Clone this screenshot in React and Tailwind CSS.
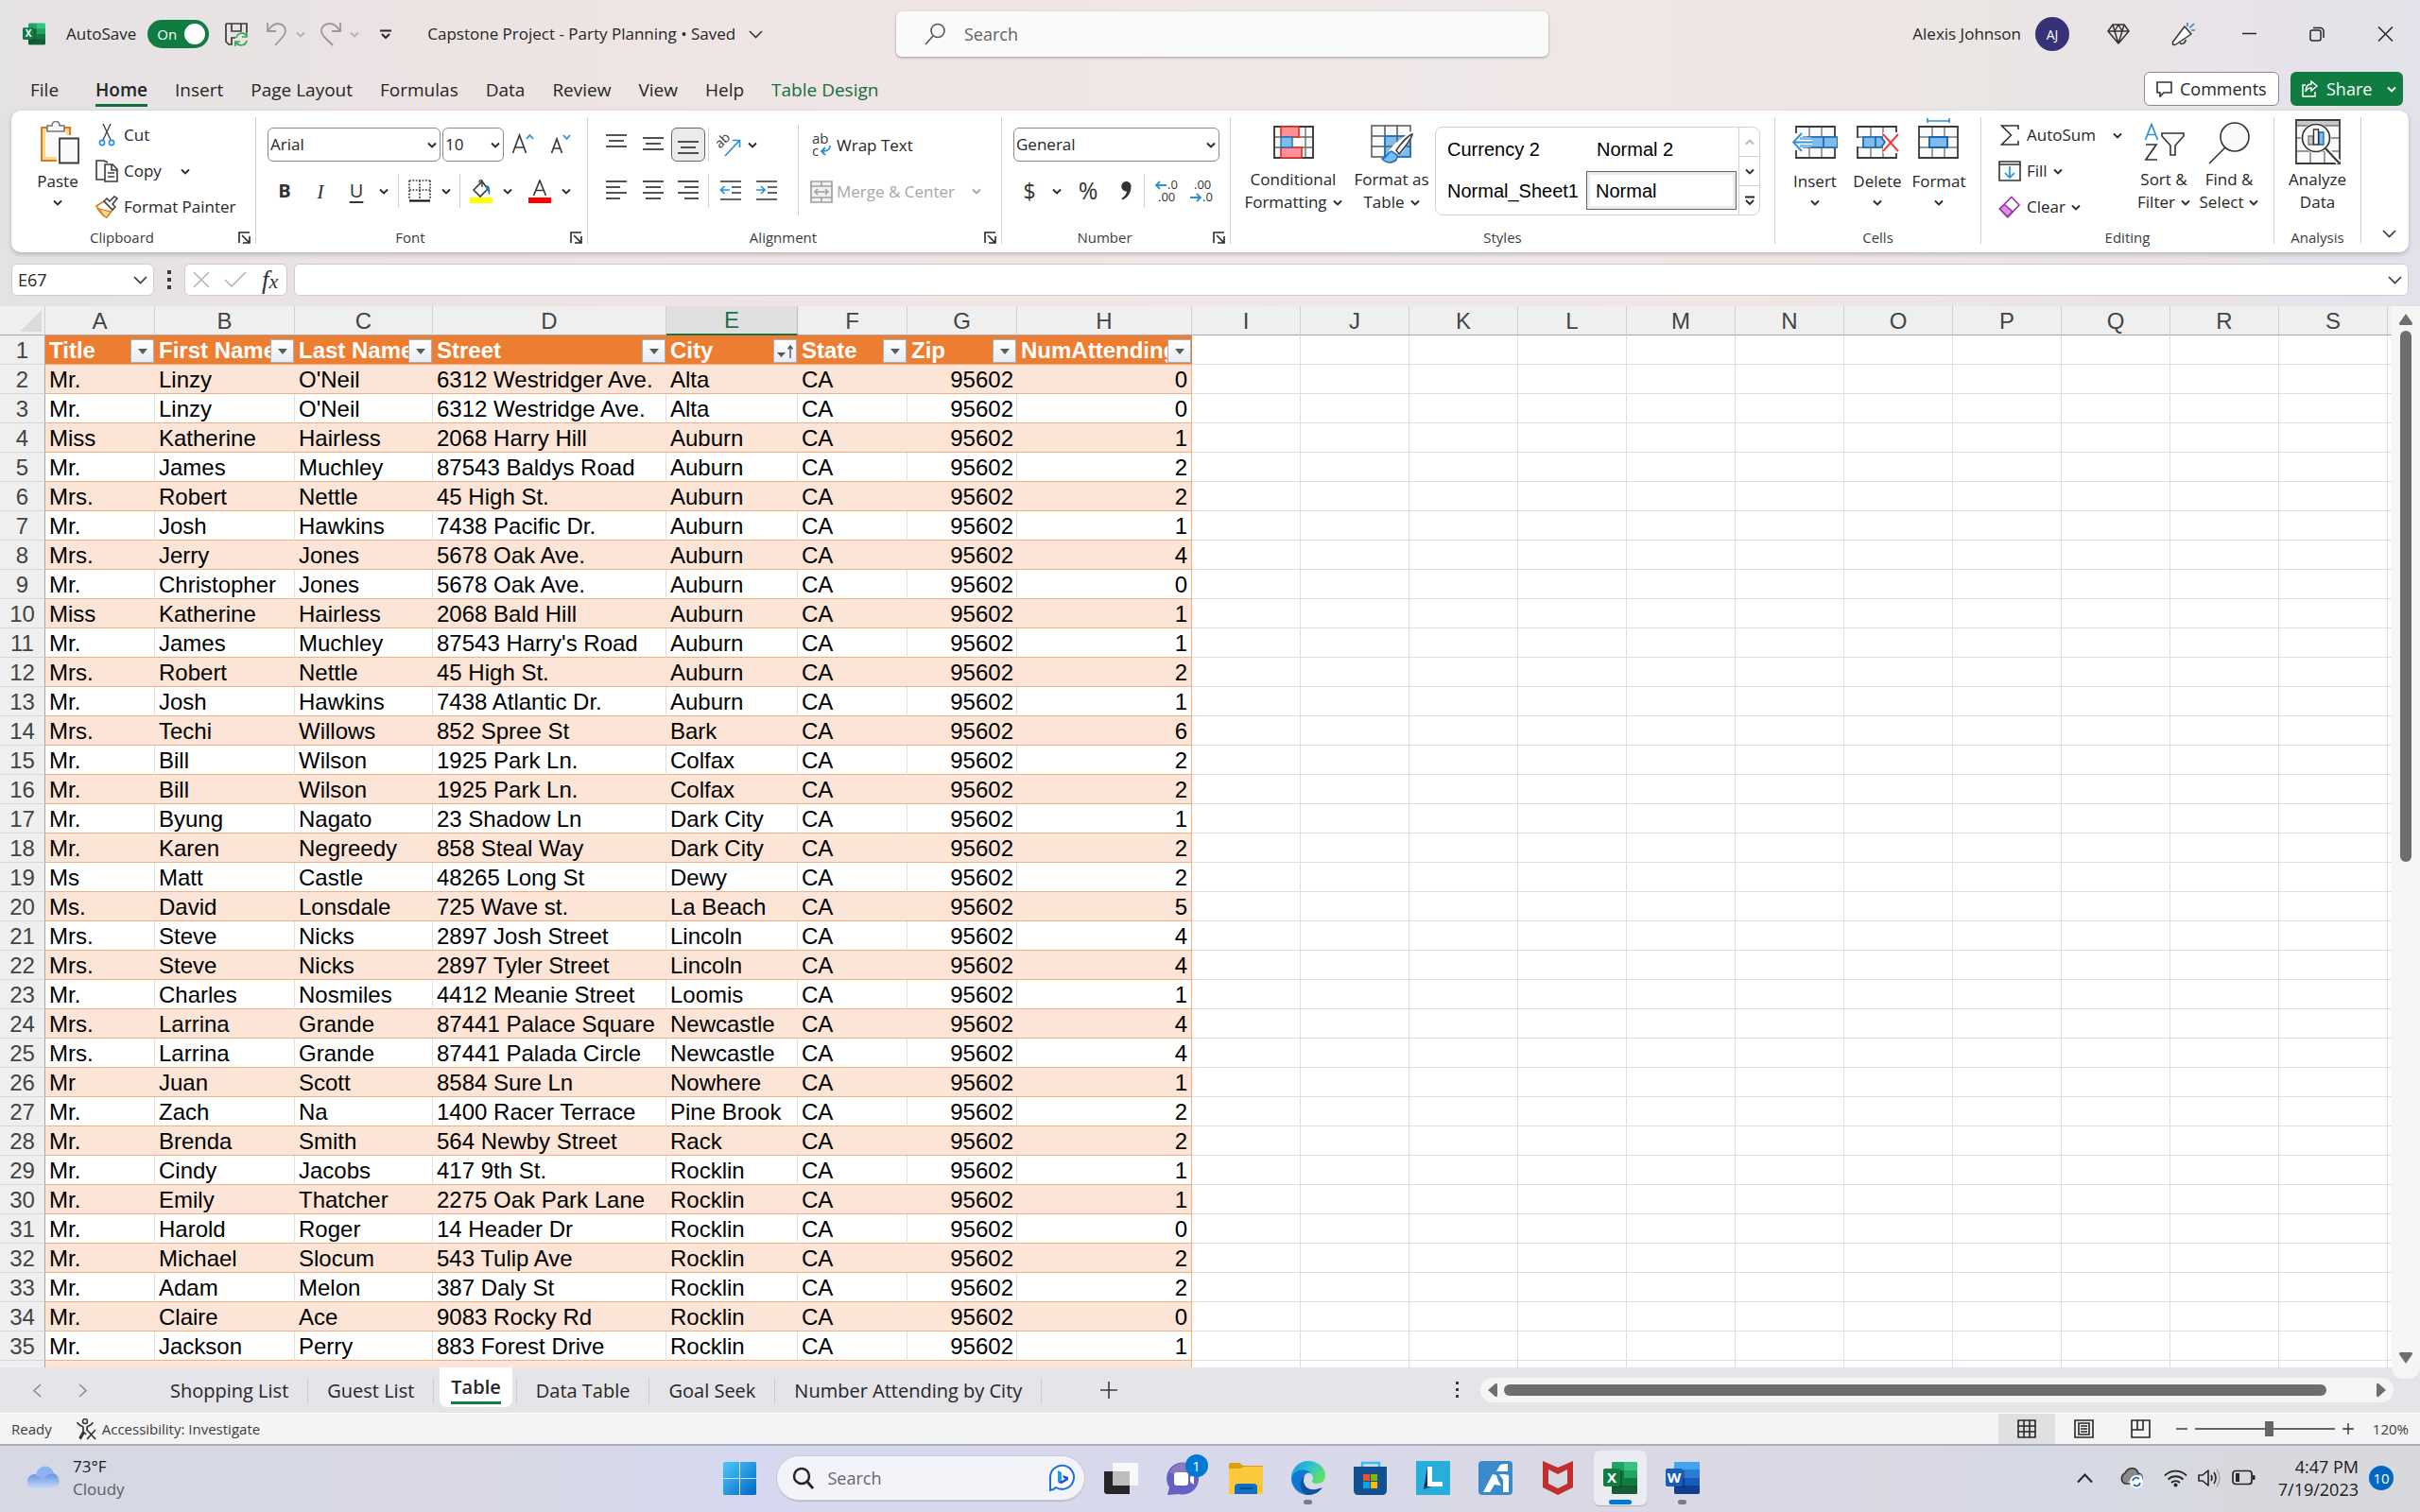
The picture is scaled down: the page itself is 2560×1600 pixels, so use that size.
import React from "react";

const people = [
  ["Mr.", "Linzy", "O'Neil", "6312 Westridger Ave.", "Alta", 0],
  ["Mr.", "Linzy", "O'Neil", "6312 Westridge Ave.", "Alta", 0],
  ["Miss", "Katherine", "Hairless", "2068 Harry Hill", "Auburn", 1],
  ["Mr.", "James", "Muchley", "87543 Baldys Road", "Auburn", 2],
  ["Mrs.", "Robert", "Nettle", "45 High St.", "Auburn", 2],
  ["Mr.", "Josh", "Hawkins", "7438 Pacific Dr.", "Auburn", 1],
  ["Mrs.", "Jerry", "Jones", "5678 Oak Ave.", "Auburn", 4],
  ["Mr.", "Christopher", "Jones", "5678 Oak Ave.", "Auburn", 0],
  ["Miss", "Katherine", "Hairless", "2068 Bald Hill", "Auburn", 1],
  ["Mr.", "James", "Muchley", "87543 Harry's Road", "Auburn", 1],
  ["Mrs.", "Robert", "Nettle", "45 High St.", "Auburn", 2],
  ["Mr.", "Josh", "Hawkins", "7438 Atlantic Dr.", "Auburn", 1],
  ["Mrs.", "Techi", "Willows", "852 Spree St", "Bark", 6],
  ["Mr.", "Bill", "Wilson", "1925 Park Ln.", "Colfax", 2],
  ["Mr.", "Bill", "Wilson", "1925 Park Ln.", "Colfax", 2],
  ["Mr.", "Byung", "Nagato", "23 Shadow Ln", "Dark City", 1],
  ["Mr.", "Karen", "Negreedy", "858 Steal Way", "Dark City", 2],
  ["Ms", "Matt", "Castle", "48265 Long St", "Dewy", 2],
  ["Ms.", "David", "Lonsdale", "725 Wave st.", "La Beach", 5],
  ["Mrs.", "Steve", "Nicks", "2897 Josh Street", "Lincoln", 4],
  ["Mrs.", "Steve", "Nicks", "2897 Tyler Street", "Lincoln", 4],
  ["Mr.", "Charles", "Nosmiles", "4412 Meanie Street", "Loomis", 1],
  ["Mrs.", "Larrina", "Grande", "87441 Palace Square", "Newcastle", 4],
  ["Mrs.", "Larrina", "Grande", "87441 Palada Circle", "Newcastle", 4],
  ["Mr", "Juan", "Scott", "8584 Sure Ln", "Nowhere", 1],
  ["Mr.", "Zach", "Na", "1400 Racer Terrace", "Pine Brook", 2],
  ["Mr.", "Brenda", "Smith", "564 Newby Street", "Rack", 2],
  ["Mr.", "Cindy", "Jacobs", "417 9th St.", "Rocklin", 1],
  ["Mr.", "Emily", "Thatcher", "2275 Oak Park Lane", "Rocklin", 1],
  ["Mr.", "Harold", "Roger", "14 Header Dr", "Rocklin", 0],
  ["Mr.", "Michael", "Slocum", "543 Tulip Ave", "Rocklin", 2],
  ["Mr.", "Adam", "Melon", "387 Daly St", "Rocklin", 2],
  ["Mr.", "Claire", "Ace", "9083 Rocky Rd", "Rocklin", 0],
  ["Mr.", "Jackson", "Perry", "883 Forest Drive", "Rocklin", 1],
  ["", "", "", "", "", ""],
];

const columns = ["A", "B", "C", "D", "E", "F", "G", "H"];
const emptyColumns = ["I", "J", "K", "L", "M", "N", "O", "P", "Q", "R", "S"];
const headers = ["Title", "First Name", "Last Name", "Street", "City", "State", "Zip", "NumAttending"];

/* ---------- small drawing helpers ---------- */

function Svg({ w, h, children, className = "" }) {
  return (
    <svg width={w} height={h} viewBox={`0 0 ${w} ${h}`} fill="none" className={`shrink-0 ${className}`} aria-hidden="true">
      {children}
    </svg>
  );
}

function Chev({ className = "text-[#2b2b2b]" }) {
  return (
    <Svg w={10} h={7} className={className}>
      <path d="M1 1.5 5 5.5 9 1.5" stroke="currentColor" strokeWidth="1.9" />
    </Svg>
  );
}

function WideChev({ className = "text-[#3b3b3b]" }) {
  return (
    <Svg w={15} h={9} className={className}>
      <path d="M1 1 7.5 7.5 14 1" stroke="currentColor" strokeWidth="1.7" />
    </Svg>
  );
}

function OfficeLogo({ size, letter, colors }) {
  const [a, b, c, d, tile] = colors;
  return (
    <svg width={size} height={size} viewBox="0 0 36 36" className="shrink-0" aria-hidden="true">
      <rect x="9" y="1" width="27" height="34" rx="2" fill={c} />
      {letter === "X" ? (
        <>
          <path d="M9 3a2 2 0 0 1 2-2h11v9H9z" fill={a} />
          <path d="M22 1h12a2 2 0 0 1 2 2v7H22z" fill={b} />
          <path d="M22 10h14v8H22z" fill={a} />
          <path d="M9 10h13v8H9z" fill={c} />
          <path d="M9 26h27v7a2 2 0 0 1-2 2H11a2 2 0 0 1-2-2z" fill={d} />
        </>
      ) : (
        <>
          <path d="M9 3a2 2 0 0 1 2-2h23a2 2 0 0 1 2 2v6.500H9z" fill={b} />
          <path d="M9 9.500h27V18H9z" fill={a} />
          <path d="M9 26h27v7a2 2 0 0 1-2 2H11a2 2 0 0 1-2-2z" fill={d} />
        </>
      )}
      <rect x="9" y="10" width="11" height="18" fill="#000" opacity=".25" />
      <rect x="0" y="8" width="18" height="19" rx="2" fill={tile} />
      <text x="9" y="23" fontSize="15" fontWeight="700" fontFamily="Open Sans, sans-serif" fill="#fff" textAnchor="middle">
        {letter}
      </text>
    </svg>
  );
}
const excelColors = ["#21a366", "#33c481", "#107c41", "#185c37", "#107c41"];
const wordColors = ["#2b7cd3", "#41a5ee", "#185abd", "#103f91", "#185abd"];

/* ---------- title bar ---------- */

function TitleBar() {
  return (
    <header className="grid h-[72px] grid-cols-[948fr_690px_922fr] items-center">
      <div className="flex items-center pl-6 text-[17px] text-[#262626]">
        <OfficeLogo size={24} letter="X" colors={excelColors} />
        <label className="ml-[22px] flex cursor-pointer items-center gap-3">
          <span>AutoSave</span>
          <input type="checkbox" defaultChecked className="sr-only" />
          <span className="flex h-[30px] w-[65px] items-center justify-between rounded-full bg-[#107c41] pr-1 pl-2.5 text-[15px] text-white">
            On
            <span className="size-[22px] rounded-full bg-white" />
          </span>
        </label>
        <button aria-label="Save" className="ml-[17px]">
          <Svg w={25} h={25}>
            <path d="M1 1h22v10M1 1v19l3 3h4M7 1v8h10V1M7 23v-7h4" stroke="#3b3b3b" strokeWidth="1.700" />
            <path d="M12 16a6 6 0 0 1 11-2M23 10v5h-5M23 19a6 6 0 0 1-11 2M11 25v-5h5" stroke="#35a853" strokeWidth="1.700" />
          </Svg>
        </button>
        <button aria-label="Undo" className="ml-[18px] flex items-center gap-2">
          <Svg w={24} h={26}>
            <path d="M2 1v9h9M2.500 9.500C6 4 9 2 13 2c5 0 8 3.500 8 7.500 0 3-1 4.500-3 6.500l-8 9" stroke="#9c9899" strokeWidth="1.800" />
          </Svg>
          <Chev className="text-[#b5b1b2]" />
        </button>
        <button aria-label="Redo" className="ml-[15px] flex items-center gap-2">
          <Svg w={24} h={26}>
            <path d="M22 1v9h-9M21.500 9.500C18 4 15 2 11 2 6 2 2 5 2 9.500c0 3 1 4.500 3 6.500l9 9" stroke="#9c9899" strokeWidth="1.800" />
          </Svg>
          <Chev className="text-[#b5b1b2]" />
        </button>
        <button aria-label="Customize Quick Access Toolbar" className="ml-[22px]">
          <Svg w={12} h={11}>
            <path d="M0 1.500h12M2 5l4 4 4-4" stroke="#262626" strokeWidth="2" />
          </Svg>
        </button>
        <button className="ml-[38px] flex items-center gap-3.5 whitespace-nowrap">
          Capstone Project - Party Planning • Saved
          <WideChev />
        </button>
      </div>
      <label className="flex h-12 items-center gap-5 rounded-md bg-[#fafafa] px-[30px] shadow-[0_1px_3px_rgba(0,0,0,0.35)]">
        <Svg w={22} h={24}>
          <circle cx="14" cy="8.500" r="7" stroke="#555" strokeWidth="1.600" />
          <path d="M9 14 1 23" stroke="#555" strokeWidth="1.600" />
        </Svg>
        <input placeholder="Search" aria-label="Search" className="min-w-0 flex-1 bg-transparent text-[18px] outline-none placeholder:text-[#616161]" />
      </label>
      <div className="flex items-center justify-end pr-7 text-[17px] text-[#262626]">
        <span>Alexis Johnson</span>
        <span className="ml-[15px] flex size-9 items-center justify-center rounded-full bg-[#373277] text-[14px] text-white">AJ</span>
        <button aria-label="Premium" className="ml-10">
          <Svg w={24} h={24}>
            <path d="M6 2h12l5 7-11 13L1 9zM1 9h22M6 2l2 7 4 13 4-13 2-7M8 9l4-7 4 7" stroke="#333" strokeWidth="1.500" strokeLinejoin="round" />
          </Svg>
        </button>
        <button aria-label="What's new" className="ml-11">
          <Svg w={25} h={25}>
            <path d="M14 4 1.500 20.500v2.500l2.500.500L21 12z" fill="#fff" stroke="#333" strokeWidth="1.500" strokeLinejoin="round" />
            <path d="M9 21c1 2.500 6 1.500 6-3" stroke="#333" strokeWidth="1.500" />
            <path d="M17 4V0M19.500 5.500 24 1M21 8h4" stroke="#2b90d9" strokeWidth="1.700" />
          </Svg>
        </button>
        <button aria-label="Minimize" className="ml-[50px]">
          <Svg w={15} h={15}><path d="M0 6.500h15" stroke="#262626" strokeWidth="1.500" /></Svg>
        </button>
        <button aria-label="Restore" className="ml-14">
          <Svg w={16} h={16}>
            <rect x="1" y="4" width="11" height="11" rx="2" stroke="#262626" strokeWidth="1.500" />
            <path d="M4 1.500h7.500a3.500 3.500 0 0 1 3.500 3.500V12" stroke="#262626" strokeWidth="1.500" />
          </Svg>
        </button>
        <button aria-label="Close" className="ml-14">
          <Svg w={17} h={16}><path d="m1 .500 15 15M16 .500l-15 15" stroke="#262626" strokeWidth="1.500" /></Svg>
        </button>
      </div>
    </header>
  );
}

const tabs = ["Home", "Insert", "Page Layout", "Formulas", "Data", "Review", "View", "Help", "Table Design"];

function TabRow() {
  return (
    <div className="flex h-[45px] items-start justify-between pt-1 pr-[18px] pl-8">
      <nav className="flex gap-[29px] pt-1 text-[19px] leading-[30px] text-[#262626]">
        <button className="mr-2.5 h-[33px] pb-[3px]">File</button>
        {tabs.map((t) =>
          t === "Home" ? (
            <button key={t} className="h-[33px] border-b-[3px] border-[#0f703b] font-semibold">{t}</button>
          ) : (
            <button key={t} className={t === "Table Design" ? "h-[33px] pb-[3px] text-[#0f703b]" : "h-[33px] pb-[3px]"}>{t}</button>
          )
        )}
      </nav>
      <div className="flex gap-3 text-[18px]">
        <button className="flex h-9 w-[143px] items-center gap-2 rounded-md border border-[#8a8a8a] bg-white pl-3 text-[#262626]">
          <Svg w={17} h={17}><path d="M1 1h15v11H8l-4 4v-4H1z" stroke="#333" strokeWidth="1.600" /></Svg>
          Comments
        </button>
        <button className="flex h-9 w-[119px] items-center gap-2 rounded-md bg-[#107c41] pl-3 text-white">
          <Svg w={18} h={18}>
            <path d="M4 5H1v12h13v-5M10 1l6 5-6 5V8c-3 0-5 1-6 4 0-5 2-8 6-8z" stroke="#fff" strokeWidth="1.500" />
          </Svg>
          Share
          <Chev className="ml-2 text-white" />
        </button>
      </div>
    </div>
  );
}

/* ---------- ribbon ---------- */

function Launcher() {
  return (
    <button aria-label="More options">
      <Svg w={13} h={13}>
        <path d="M1 12V1h11M4 4l7 7M12 5v7H5" stroke="#262626" strokeWidth="1.600" />
      </Svg>
    </button>
  );
}

function Group({ label, launcher, className, children }) {
  return (
    <section aria-label={label} className={`flex flex-col border-r border-[#d1d1d1] ${className}`}>
      <div className="flex min-h-0 flex-1">{children}</div>
      <div className="flex h-3.5 items-center text-[15px] leading-5 text-[#3b3b3b]">
        <span className={launcher ? "flex-1 pr-1.5 text-center" : "flex-1 text-center"}>{label}</span>
        {launcher && <span className="flex w-[18px]"><Launcher /></span>}
      </div>
    </section>
  );
}

function BigButton({ icon, lines, chevBelow, chevInline, className }) {
  return (
    <button className={`flex flex-col items-center text-[17px] leading-6 whitespace-nowrap text-[#262626] ${className}`}>
      <span className="flex h-[54px] items-end justify-center pb-1">{icon}</span>
      <span className={chevBelow ? "pt-0.5" : ""}>{lines[0]}</span>
      {lines[1] && (
        <span className="flex items-center gap-1.5">
          {lines[1]}
          {chevInline && <Chev />}
        </span>
      )}
      {chevBelow && <span className="flex h-5 items-center"><Chev /></span>}
    </button>
  );
}

function SmallButton({ icon, label, chev, className = "h-[38px] gap-1.5" }) {
  return (
    <button className={`flex items-center text-[17px] whitespace-nowrap text-[#262626] ${className}`}>
      <span className="flex w-6 justify-center">{icon}</span>
      {label}
      {chev}
    </button>
  );
}

function Rule({ className = "h-9" }) {
  return <span className={`w-px shrink-0 bg-[#d1d1d1] ${className}`} />;
}

function IconButton({ label, className, children }) {
  return (
    <button aria-label={label} className={`flex h-9 shrink-0 items-center justify-center ${className}`}>
      {children}
    </button>
  );
}

function DropSelect({ label, options, className }) {
  return (
    <div className={`grid h-9 items-center ${className}`}>
      <select aria-label={label} className="col-start-1 row-start-1 h-9 w-full appearance-none rounded-md border border-[#8a8a8a] bg-white pl-0.5 text-[17px] text-[#262626]">
        {options.map((o) => <option key={o}>{o}</option>)}
      </select>
      <span className="pointer-events-none col-start-1 row-start-1 mr-1 justify-self-end"><Chev /></span>
    </div>
  );
}

function Lines({ rows, w = 22 }) {
  return (
    <Svg w={w} h={24}>
      {rows.map(([x1, x2, y]) => (
        <path key={y} d={`M${x1} ${y}H${x2}`} stroke="#333" strokeWidth="1.700" />
      ))}
    </Svg>
  );
}

function ClipboardGroup() {
  return (
    <Group label="Clipboard" launcher className="w-[259px]">
      <BigButton
        className="ml-4 w-[66px]"
        lines={["Paste"]}
        chevBelow
        icon={
          <Svg w={42} h={46} className="ml-1">
            <path d="M2 7h30v35H2z" fill="#fbd88f" stroke="#e07b1a" strokeWidth="2" />
            <path d="M6 10h22v28H6z" fill="#fafafa" />
            <path d="M8 11V5h5c0-6 8-6 8 0h5v6z" fill="#fafafa" stroke="#777" strokeWidth="1.600" />
            <path d="M20 17h21v27H20z" fill="#fafafa" stroke="#fff" strokeWidth="4" />
            <path d="M21 18.500h20v26H21z" fill="#fafafa" stroke="#3b3b3b" strokeWidth="1.800" />
          </Svg>
        }
      />
      <div className="ml-[7px] flex flex-col">
        <SmallButton
          label="Cut"
          icon={
            <Svg w={18} h={24}>
              <path d="M5 0l8 17M13 0 5 17" stroke="#444" strokeWidth="1.400" />
              <circle cx="4" cy="20" r="2.600" stroke="#2b90d9" strokeWidth="1.700" />
              <circle cx="14" cy="20" r="2.600" stroke="#2b90d9" strokeWidth="1.700" />
            </Svg>
          }
        />
        <SmallButton
          label="Copy"
          chev={<span className="ml-3.5"><Chev /></span>}
          icon={
            <Svg w={24} h={24}>
              <path d="M9 21H1V1h8l4 2" fill="#fafafa" stroke="#3b3b3b" strokeWidth="1.600" />
              <path d="M10 5h8l5 5v13H10zM17 5v6h6M13 14h7M13 18h7" fill="#fafafa" stroke="#3b3b3b" strokeWidth="1.600" />
            </Svg>
          }
        />
        <SmallButton
          label="Format Painter"
          icon={
            <Svg w={24} h={24}>
              <path d="M1 11 9 6l9 9-6 8c-5-2-8-6-11-12z" fill="#fff" stroke="#e07b1a" strokeWidth="1.700" />
              <path d="m4 14 12 3-4 6c-3-1-6-5-8-9z" fill="#fbd88f" stroke="#e07b1a" strokeWidth="1.200" />
              <path d="m9 6 3-3 3 3 5-5 3 2-5 6 3 3-3 3z" fill="#fafafa" stroke="#3b3b3b" strokeWidth="1.500" />
            </Svg>
          }
        />
      </div>
    </Group>
  );
}

function FontGroup() {
  return (
    <Group label="Font" launcher className="w-[351px]">
      <div className="flex flex-col gap-[13px] pt-[11px] pl-3">
        <div className="flex items-center">
          <DropSelect label="Font" options={["Arial"]} className="w-[183px]" />
          <DropSelect label="Font size" options={["10"]} className="ml-0.5 w-[65px]" />
          <IconButton label="Increase font size" className="w-10">
            <Svg w={24} h={24}>
              <path d="M1.500 21 8.500 2l7 19M4 15h9" stroke="#3b3b3b" strokeWidth="1.700" />
              <path d="m16 6 3.500-4L23 6" stroke="#2b90d9" strokeWidth="1.800" />
            </Svg>
          </IconButton>
          <IconButton label="Decrease font size" className="w-10">
            <Svg w={22} h={24}>
              <path d="M1.500 21 7 6l5.500 15M3.500 16h7" stroke="#3b3b3b" strokeWidth="1.700" />
              <path d="m14 2 3.500 4L21 2" stroke="#2b90d9" strokeWidth="1.800" />
            </Svg>
          </IconButton>
        </div>
        <div className="flex items-center text-[20px] text-[#333]">
          <IconButton label="Bold" className="w-9"><b>B</b></IconButton>
          <IconButton label="Italic" className="w-10"><i className="font-['Liberation_Serif',serif] text-[22px]">I</i></IconButton>
          <IconButton label="Underline" className="w-9"><u className="underline-offset-4">U</u></IconButton>
          <IconButton label="Underline styles" className="w-[22px]"><Chev /></IconButton>
          <Rule className="ml-1 h-9" />
          <IconButton label="Borders" className="ml-1 w-9">
            <Svg w={24} h={24}>
              <path d="M1 1h22M1 11h22M1 1v20M12 1v20M23 1v20" stroke="#3b3b3b" strokeWidth="1.700" strokeDasharray="1.800 1.600" />
              <path d="M1 22.500h22" stroke="#000" strokeWidth="2" />
            </Svg>
          </IconButton>
          <IconButton label="Border styles" className="w-5"><Chev /></IconButton>
          <Rule className="ml-1 h-9" />
          <IconButton label="Fill color" className="ml-1 w-9">
            <Svg w={24} h={25}>
              <path d="M4 11 13 2l6 8-8 8z" fill="#fafafa" stroke="#3b3b3b" strokeWidth="1.600" />
              <path d="M13 8V2c0-2-3-2-3 1" stroke="#3b3b3b" strokeWidth="1.400" />
              <path d="M17 6c4 0 5 4 4 10-2 0-1-6-4-7z" fill="#2277bb" />
              <path d="M0 19h24v6H0z" fill="#ff0" />
            </Svg>
          </IconButton>
          <IconButton label="Fill colors" className="w-5"><Chev /></IconButton>
          <IconButton label="Font color" className="ml-1.5 w-9">
            <Svg w={24} h={25}>
              <path d="M5.500 17 12 1l6.500 16M8 11.500h8" stroke="#3b3b3b" strokeWidth="1.700" />
              <path d="M0 19h24v6H0z" fill="#f00" />
            </Svg>
          </IconButton>
          <IconButton label="Font colors" className="w-5"><Chev /></IconButton>
        </div>
      </div>
    </Group>
  );
}

function AlignmentGroup() {
  return (
    <Group label="Alignment" launcher className="w-[438px]">
      <div className="flex flex-col gap-[13px] pt-[11px] pl-[10px]">
        <div className="flex items-center">
          <IconButton label="Top align" className="w-[39px]"><Lines rows={[[0, 22, 2], [3, 19, 8], [0, 22, 14]]} /></IconButton>
          <IconButton label="Middle align" className="w-[39px]"><Lines rows={[[0, 22, 5], [3, 19, 11], [0, 22, 17]]} /></IconButton>
          <IconButton label="Bottom align" className="w-9 rounded-md border border-[#666] bg-[#ebebeb]"><Lines rows={[[0, 22, 9], [3, 19, 15], [0, 22, 21]]} /></IconButton>
          <Rule className="ml-[3px] h-9" />
          <IconButton label="Orientation" className="ml-1 w-[34px]">
            <Svg w={26} h={26}>
              <text x="1" y="13" fontSize="14" fontFamily="Open Sans, sans-serif" fill="#3b3b3b" transform="rotate(-45 8 12)">ab</text>
              <path d="M9 25 24 9M17 8.500h7.500V16" stroke="#2b90d9" strokeWidth="1.700" />
            </Svg>
          </IconButton>
          <IconButton label="Orientation options" className="w-4"><Chev /></IconButton>
        </div>
        <div className="flex items-center">
          <IconButton label="Align left" className="w-[39px]"><Lines rows={[[0, 22, 2], [0, 15, 8], [0, 22, 14], [0, 15, 20]]} /></IconButton>
          <IconButton label="Center" className="w-[39px]"><Lines rows={[[0, 22, 2], [3, 19, 8], [0, 22, 14], [3, 19, 20]]} /></IconButton>
          <IconButton label="Align right" className="w-9"><Lines rows={[[0, 22, 2], [7, 22, 8], [0, 22, 14], [7, 22, 20]]} /></IconButton>
          <Rule className="ml-[3px] h-9" />
          <IconButton label="Decrease indent" className="ml-1 w-[38px]">
            <Svg w={24} h={24}>
              <path d="M1 2h22M13 8h10M13 14h10M1 21h22" stroke="#333" strokeWidth="1.700" />
              <path d="M11 11H2M5.500 7 1.500 11l4 4" stroke="#2b90d9" strokeWidth="1.700" />
            </Svg>
          </IconButton>
          <IconButton label="Increase indent" className="w-[38px]">
            <Svg w={24} h={24}>
              <path d="M1 2h22M13 8h10M13 14h10M1 21h22" stroke="#333" strokeWidth="1.700" />
              <path d="M1 11h9M6 7l4 4-4 4" stroke="#2b90d9" strokeWidth="1.700" />
            </Svg>
          </IconButton>
        </div>
      </div>
      <Rule className="mt-2 ml-3.5 h-24" />
      <div className="flex flex-col gap-[10px] pt-[10px] pl-3">
        <SmallButton
          className="h-[39px] gap-1"
          label="Wrap Text"
          icon={
            <Svg w={24} h={27}>
              <text x="2" y="12" fontSize="15" fontFamily="Open Sans, sans-serif" fill="#3b3b3b">ab</text>
              <text x="2" y="25" fontSize="15" fontFamily="Open Sans, sans-serif" fill="#3b3b3b">c</text>
              <path d="M21 14c0 5-3 6-8 6M16 16l-4 4 4 4" stroke="#2b90d9" strokeWidth="1.900" />
            </Svg>
          }
        />
        <SmallButton
          className="h-[39px] gap-1"
          label={<span className="text-[#a6a6a6]">Merge &amp; Center</span>}
          chev={<span className="ml-3.5"><Chev className="text-[#a6a6a6]" /></span>}
          icon={
            <Svg w={24} h={24}>
              <path d="M1 1h22v22H1zM1 6h22M1 18h22M12 1v5M12 18v5" fill="#f1f1f1" stroke="#a0a0a0" strokeWidth="1.700" />
              <path d="M5 12h14M8 9l-3 3 3 3M16 9l3 3-3 3" stroke="#a0a0a0" strokeWidth="1.500" />
            </Svg>
          }
        />
      </div>
    </Group>
  );
}

function DecimalIcon({ grow }) {
  return (
    <Svg w={26} h={26}>
      <text x={grow ? 14 : 4} y="11" fontSize="13" fontFamily="Open Sans, sans-serif" fill="#333">{grow ? ".0" : ".00"}</text>
      <text x={grow ? 4 : 13} y="24" fontSize="13" fontFamily="Open Sans, sans-serif" fill="#333">{grow ? ".00" : ".0"}</text>
      {grow ? (
        <path d="M13 7H2M6 3 2 7l4 4" stroke="#2b90d9" strokeWidth="1.800" />
      ) : (
        <path d="M0 20h11M7 16l4 4-4 4" stroke="#2b90d9" strokeWidth="1.800" />
      )}
    </Svg>
  );
}

function NumberGroup() {
  return (
    <Group label="Number" launcher className="w-[242px]">
      <div className="flex flex-col gap-[13px] pt-[11px] pl-3">
        <DropSelect label="Number format" options={["General"]} className="w-[218px]" />
        <div className="flex items-center text-[#333]">
          <IconButton label="Accounting format" className="w-[34px] text-[23px]"><span>$</span></IconButton>
          <IconButton label="Accounting formats" className="w-6"><Chev /></IconButton>
          <IconButton label="Percent style" className="w-[42px] text-[25px]"><span>%</span></IconButton>
          <IconButton label="Comma style" className="w-[38px]">
            <Svg w={12} h={20}>
              <path d="M6 0a5 5 0 0 1 5.500 5.500C11.500 12 8 17 2.500 19.500L1.500 18C5 16 6.500 13 7 10.500A5 5 0 1 1 6 0z" fill="#333" />
            </Svg>
          </IconButton>
          <Rule />
          <IconButton label="Increase decimal" className="ml-1 w-[38px]"><DecimalIcon grow /></IconButton>
          <IconButton label="Decrease decimal" className="w-[38px]"><DecimalIcon /></IconButton>
        </div>
      </div>
    </Group>
  );
}

function StylesGroup() {
  return (
    <Group label="Styles" className="min-w-[575px] flex-1">
      <BigButton
        className="ml-2 w-[116px]"
        lines={["Conditional", "Formatting"]}
        chevInline
        icon={
          <Svg w={43} h={35} className="mb-1.5">
            <path d="M1 1h41v33H1zM1 12h41M1 23h41M9 1v33M34 1v33" fill="#fafafa" stroke="#666" strokeWidth="1.300" />
            <path d="M1 1h41v33H1z" stroke="#3b3b3b" strokeWidth="1.800" />
            <path d="M8 1h19v11H8zM8 23h22v11H8z" fill="#ff9098" stroke="#dd2c1f" strokeWidth="1.600" />
            <path d="M8 12h12v11H8z" fill="#7fbcec" stroke="#1f6fb8" strokeWidth="1.400" />
          </Svg>
        }
      />
      <BigButton
        className="w-[92px]"
        lines={["Format as", "Table"]}
        chevInline
        icon={
          <Svg w={45} h={42}>
            <path d="M1 1h41v33H1z" fill="#fafafa" />
            <path d="M15 12h27v22H15z" fill="#7fbcec" />
            <path d="M1 1h41v33H1zM1 12h41M1 23h41M15 1v33M28 1v33" stroke="#555" strokeWidth="1.500" />
            <path d="M15 12h27v22H15z" stroke="#1b75c4" strokeWidth="1.500" />
            <path d="M44 9 32 27l-6 5-4-4 5-6z" fill="#fff" stroke="#fff" strokeWidth="5" />
            <path d="M44 10c-4 1-12 10-17 17l3 4c6-7 13-16 14-21z" fill="#fafafa" stroke="#3b3b3b" strokeWidth="1.500" />
            <path d="M22 28c-5 1-4 7-10 8 5 6 17 5 16-4z" fill="#7fbcec" stroke="#1b75c4" strokeWidth="1.600" />
          </Svg>
        }
      />
      <div className="mt-2.5 flex h-[94px] min-w-[342px] flex-1 rounded-lg border border-[#d1d1d1] font-['Liberation_Sans',Arial,sans-serif] text-[20px] leading-none text-black">
        <div className="grid flex-1 grid-cols-[159px_1fr] grid-rows-[46px_41px]">
          <button className="pl-3 text-left">Currency 2</button>
          <button className="pl-[11px] text-left">Normal 2</button>
          <button className="pl-3 text-left whitespace-nowrap">Normal_Sheet1</button>
          <button className="border border-[#666] p-0 text-left">
            <span className="flex h-full items-center border-[3px] border-[#ebebeb] pl-1.5">Normal</span>
          </button>
        </div>
        <div className="ml-0.5 flex w-[22px] flex-col divide-y divide-[#d1d1d1] border-l border-[#d1d1d1]">
          <button aria-label="Scroll styles up" className="flex flex-1 items-center justify-center">
            <Chev className="rotate-180 text-[#b5b5b5]" />
          </button>
          <button aria-label="Scroll styles down" className="flex flex-1 items-center justify-center"><Chev /></button>
          <button aria-label="More styles" className="flex flex-1 items-center justify-center">
            <Svg w={12} h={11}><path d="M1 1.500h10M2 5l4 4 4-4" stroke="#262626" strokeWidth="1.800" /></Svg>
          </button>
        </div>
      </div>
      <span className="w-[15px]" />
    </Group>
  );
}

function CellGrid({ children, w = 48, x = 3 }) {
  return (
    <Svg w={w} h={44} className="mb-1.5">
      <g transform={`translate(${x} 9)`}>
        <path d="M1 1h41v33H1z" fill="#fafafa" />
        <path d="M1 12h41M1 23h41M15 1v33M28 1v33" stroke="#777" strokeWidth="1.400" />
        <path d="M1 1h41v33H1z" stroke="#3b3b3b" strokeWidth="1.800" />
        {children}
      </g>
    </Svg>
  );
}

function CellsGroup() {
  return (
    <Group label="Cells" className="w-[218px]">
      <BigButton
        className="ml-[9px] w-[66px]"
        lines={["Insert"]}
        chevBelow
        icon={
          <CellGrid>
            <path d="M-2 12h20v11H-2zM-2 8H8v18H-2z" fill="#fff" />
            <path d="M14 12h31v11H14zM30 12v11" fill="#7fbcec" stroke="#1167b3" strokeWidth="1.700" />
            <path d="M5 12h12v11H5z" fill="#7fbcec" />
            <path d="M-1 17.500h19" stroke="#fff" strokeWidth="5" />
            <path d="M-1 17.500h19M7 8-2 17.500 7 27" stroke="#2b90d9" strokeWidth="1.900" />
          </CellGrid>
        }
      />
      <BigButton
        className="w-[66px]"
        lines={["Delete"]}
        chevBelow
        icon={
          <CellGrid w={46} x={1}>
            <path d="M0 13h6v9H0zM28 7h18v22H28z" fill="#fff" />
            <path d="M7 12h19l4 5.500-4 5.500H7zM20 12v11" fill="#7fbcec" stroke="#1167b3" strokeWidth="1.700" />
            <path d="m28 9 16 18M44 9 28 27" stroke="#ee3b3b" strokeWidth="1.900" />
          </CellGrid>
        }
      />
      <BigButton
        className="w-16"
        lines={["Format"]}
        chevBelow
        icon={
          <CellGrid w={44} x={0}>
            <path d="M12 12h19v11H12z" fill="#7fbcec" stroke="#1167b3" strokeWidth="1.900" />
            <path d="M10-5h23M10-8v5M33-8v5" stroke="#2b90d9" strokeWidth="1.600" />
          </CellGrid>
        }
      />
    </Group>
  );
}

function EditingGroup() {
  return (
    <Group label="Editing" className="w-[310px]">
      <div className="ml-[18px] flex w-[140px] flex-col">
        <SmallButton
          label="AutoSum"
          chev={<span className="ml-3"><Chev /></span>}
          icon={<Svg w={20} h={22}><path d="M19 5V1H1.500l10 10-10 10H19v-4" stroke="#333" strokeWidth="1.600" /></Svg>}
        />
        <SmallButton
          label="Fill"
          chev={<Chev />}
          icon={
            <Svg w={24} h={22}>
              <path d="M1 1h22v20H1zM1 4h22" fill="#fafafa" stroke="#333" strokeWidth="1.600" />
              <path d="M12 6v12M7 13l5 5 5-5" stroke="#2b90d9" strokeWidth="1.700" />
            </Svg>
          }
        />
        <SmallButton
          label="Clear"
          chev={<Chev />}
          icon={
            <Svg w={24} h={24}>
              <path d="M14 1.500 22 10 10 22.500 1.500 14z" fill="#fff" stroke="#9b2fae" strokeWidth="1.600" />
              <path d="M6.500 9.500 15 17l-5.500 5.500L1.500 14z" fill="#d993e0" stroke="#9b2fae" strokeWidth="1.600" />
            </Svg>
          }
        />
      </div>
      <BigButton
        className="w-[70px]"
        lines={["Sort &", "Filter"]}
        chevInline
        icon={
          <Svg w={43} h={42} className="mb-0.5">
            <path d="M1.500 18 8 1.500 14.500 18M4 12.500h8" stroke="#2b90d9" strokeWidth="1.700" />
            <path d="M2 23h11L2 39h12" stroke="#333" strokeWidth="1.700" />
            <path d="M19 11h23v3l-9 10v10h-5V24l-9-10z" fill="#fafafa" stroke="#333" strokeWidth="1.600" />
          </Svg>
        }
      />
      <BigButton
        className="w-[68px]"
        lines={["Find &", "Select"]}
        chevInline
        icon={
          <Svg w={45} h={45}>
            <circle cx="28" cy="16" r="15" fill="#fafafa" stroke="#333" strokeWidth="1.600" />
            <path d="M18 27 1 44" stroke="#333" strokeWidth="1.600" />
          </Svg>
        }
      />
    </Group>
  );
}

function AnalysisGroup() {
  return (
    <Group label="Analysis" className="w-[92px]">
      <BigButton
        className="w-[91px]"
        lines={["Analyze", "Data"]}
        icon={
          <Svg w={48} h={48}>
            <path d="M1 1h46v46H1z" fill="#fafafa" />
            <path d="M1 1h46v6H1z" fill="#c8c8c8" />
            <path d="M1 7h46M1 20h46M1 34h46M16 34v13M31 34v13" stroke="#777" strokeWidth="1.400" />
            <path d="M1 1h46v46H1z" stroke="#3b3b3b" strokeWidth="1.800" />
            <path d="M32 31 46 46" stroke="#fff" strokeWidth="6" />
            <circle cx="22" cy="20" r="16" fill="#fff" />
            <path d="M32 31 46 46" stroke="#333" strokeWidth="2" />
            <circle cx="22" cy="20" r="14.500" fill="#fafafa" stroke="#333" strokeWidth="1.700" />
            <path d="M14 18h5v9h-5z" fill="#c8c8c8" stroke="#777" strokeWidth="1.300" />
            <path d="M25 14h5v13h-5z" fill="#7fbcec" stroke="#1167b3" strokeWidth="1.300" />
            <path d="M19.500 11h5v16h-5z" fill="#fff" stroke="#333" strokeWidth="1.400" />
          </Svg>
        }
      />
    </Group>
  );
}

function Ribbon() {
  return (
    <div className="mx-3 flex h-[150px] rounded-[10px] bg-white pt-[7px] pb-[9px] shadow-[0_2px_5px_rgba(0,0,0,0.22)]">
      <ClipboardGroup />
      <FontGroup />
      <AlignmentGroup />
      <NumberGroup />
      <StylesGroup />
      <CellsGroup />
      <EditingGroup />
      <AnalysisGroup />
      <button aria-label="Collapse ribbon" className="flex w-[50px] items-end justify-center pb-1.5 pl-2">
        <WideChev />
      </button>
    </div>
  );
}

/* ---------- formula bar ---------- */

function FormulaBar() {
  return (
    <div className="mt-3 mb-[11px] flex h-[34px] items-center px-3">
      <div className="flex h-[34px] w-[151px] items-center rounded-md border border-[#cfcccd] bg-white pr-1.5 pl-1.5">
        <input aria-label="Name Box" defaultValue="E67" className="min-w-0 flex-1 text-[18px] text-[#262626] outline-none" />
        <button aria-label="Name list"><WideChev /></button>
      </div>
      <Svg w={4} h={20} className="mx-[14px]"><path d="M0 0h4v4H0zM0 8h4v4H0zM0 16h4v4H0z" fill="#3b3b3b" /></Svg>
      <div className="flex h-[34px] w-[109px] items-center rounded-md border border-[#cfcccd] bg-white pl-2">
        <button aria-label="Cancel"><Svg w={18} h={18}><path d="m1 1 16 16M17 1 1 17" stroke="#b0b0b0" strokeWidth="1.500" /></Svg></button>
        <button aria-label="Enter" className="ml-[15px]"><Svg w={24} h={18}><path d="m1 9 7 7L23 1" stroke="#b0b0b0" strokeWidth="1.500" /></Svg></button>
        <button aria-label="Insert function" className="ml-4 font-['Liberation_Serif',serif] text-[27px] leading-none text-[#333] italic"><i>f</i><i className="text-[22px]">x</i></button>
      </div>
      <div className="ml-[7px] flex h-[34px] flex-1 items-center rounded-md border border-[#cfcccd] bg-white pr-1.5">
        <input aria-label="Formula" className="min-w-0 flex-1 px-2 text-[18px] outline-none" />
        <button aria-label="Expand formula bar"><WideChev /></button>
      </div>
    </div>
  );
}

/* ---------- worksheet ---------- */

function FilterButton({ name, sorted }) {
  return (
    <button aria-label={`Filter ${name}`} className="mb-px flex size-[25px] shrink-0 items-center justify-center border border-[#a9b0ba] bg-gradient-to-b from-white to-[#e8ebf2]">
      {sorted ? (
        <Svg w={18} h={14}>
          <path d="M0 8h9l-4.500 5z" fill="#555" />
          <path d="M14 14V2M11.500 4.500 14 1l2.500 3.500" stroke="#555" strokeWidth="1.400" />
        </Svg>
      ) : (
        <Svg w={10} h={6}><path d="M0 0h10L5 6z" fill="#5a5a5a" /></Svg>
      )}
    </button>
  );
}

const rowHead = "border-r border-b border-r-[#a6a6a6] border-b-[#d6d6d6] bg-[#efefef] px-0 pt-0.5 pb-0 text-center font-normal text-[#444]";

function Sheet() {
  return (
    <div className="min-h-0 flex-1 overflow-hidden bg-white">
      <table className="w-full table-fixed border-separate border-spacing-0 font-['Liberation_Sans',Arial,sans-serif] text-[24px] leading-7 whitespace-nowrap text-black">
        <colgroup>
          <col className="w-12" />
          <col className="w-[116px]" />
          <col className="w-[148px]" />
          <col className="w-[146px]" />
          <col className="w-[247px]" />
          <col className="w-[139px]" />
          <col className="w-[116px]" />
          <col className="w-[116px]" />
          <col className="w-[185px]" />
          {emptyColumns.map((c) => <col key={c} className="w-[115px]" />)}
          <col />
        </colgroup>
        <thead>
          <tr className="h-[31px] bg-[#efefef] text-[#444]">
            <th className="border-r border-b border-r-[#d0d0d0] border-b-[#a6a6a6] p-0 pr-[3px]">
              <Svg w={23} h={23} className="ml-auto"><path d="M23 0v23H0z" fill="#dcdcdc" /></Svg>
            </th>
            {columns.map((c) => (
              <th
                key={c}
                className={
                  c === "E"
                    ? "border-r border-b-2 border-r-[#bdbdbd] border-b-[#1e7145] bg-[#e0e0e0] px-0 pt-px pb-0 font-normal text-[#1e7145]"
                    : "border-r border-b border-r-[#d0d0d0] border-b-[#a6a6a6] px-0 pt-0.5 pb-0 font-normal"
                }
              >
                {c}
              </th>
            ))}
            {emptyColumns.map((c) => (
              <th key={c} className="border-r border-b border-r-[#d0d0d0] border-b-[#a6a6a6] px-0 pt-0.5 pb-0 font-normal">{c}</th>
            ))}
            <th className="border-b border-[#a6a6a6] p-0" />
          </tr>
        </thead>
        <tbody>
          <tr className="h-[31px]">
            <th className={rowHead}>1</th>
            {headers.map((h) => (
              <td key={h} className="border-b border-[#f4b084] bg-[#ed7d31] p-0 font-bold text-white">
                <div className="flex h-[30px] items-end pr-px pl-1">
                  <span className="min-w-0 flex-1 overflow-hidden">{h}</span>
                  <FilterButton name={h} sorted={h === "City"} />
                </div>
              </td>
            ))}
            {emptyColumns.map((c) => <td key={c} className="border-r border-b border-[#dfdfdf] p-0" />)}
            <td className="border-b border-[#dfdfdf] p-0" />
          </tr>
          {people.map((p, i) => {
            const banded = i % 2 === 0;
            const cell = banded
              ? "h-[31px] border-b border-b-[#f4b084] bg-[#fce4d6] px-1 pt-0.5 pb-0"
              : "h-[31px] border-r border-b border-r-[#dfdfdf] border-b-[#f4b084] pr-[3px] pl-1 pt-0.5 pb-0";
            const last = banded
              ? "border-r border-b border-[#f4b084] bg-[#fce4d6] px-1 pt-0.5 pb-0 text-right"
              : "border-r border-b border-[#f4b084] px-1 pt-0.5 pb-0 text-right";
            const filled = p[0] !== "";
            return (
              <tr key={i}>
                <th className={rowHead}>{filled ? i + 2 : ""}</th>
                {p.slice(0, 5).map((v, j) => <td key={j} className={cell}>{v}</td>)}
                <td className={cell}>{filled ? "CA" : ""}</td>
                <td className={`${cell} text-right`}>{filled ? "95602" : ""}</td>
                <td className={last}>{p[5]}</td>
                {emptyColumns.map((c) => <td key={c} className="border-r border-b border-[#dfdfdf] p-0" />)}
                <td className="border-b border-[#dfdfdf] p-0" />
              </tr>
            );
          })}
        </tbody>
      </table>
    </div>
  );
}

function VerticalScroll() {
  return (
    <div className="relative -mb-3 flex w-[30px] flex-col items-center rounded-b-xl bg-[#f5f5f5] pt-2 pb-4">
      <Svg w={14} h={12}><path d="M7 0 14 10a2 2 0 0 1-1 2H1a2 2 0 0 1-1-2z" fill="#6e6e6e" /></Svg>
      <div className="mt-1.5 flex flex-1 flex-col">
        <div className="h-[52%] w-3 rounded-full bg-[#6e6e6e]" />
      </div>
      <Svg w={14} h={12}><path d="M7 12 0 2a2 2 0 0 1 1-2h12a2 2 0 0 1 1 2z" fill="#6e6e6e" /></Svg>
    </div>
  );
}

/* ---------- sheet tabs and status bar ---------- */

function SheetTab({ children }) {
  return (
    <div className="flex items-center">
      <button className="px-5">{children}</button>
      <span className="h-7 w-px bg-[#cbcbd0]" />
    </div>
  );
}

function SheetTabs() {
  return (
    <div className="flex h-12 shrink-0 items-center bg-[#e4e4e9] text-[20px] text-[#262626]">
      <button aria-label="Previous sheet" className="ml-[34px]"><Svg w={10} h={15}><path d="M9 1 2 7.500 9 14" stroke="#8b8b8b" strokeWidth="1.600" /></Svg></button>
      <button aria-label="Next sheet" className="ml-[39px]"><Svg w={10} h={15}><path d="m1 1 7 6.500L1 14" stroke="#8b8b8b" strokeWidth="1.600" /></Svg></button>
      <div className="ml-[67px] flex h-12 items-stretch pt-0.5 whitespace-nowrap">
        <SheetTab>Shopping List</SheetTab>
        <SheetTab>Guest List</SheetTab>
        <div className="-mt-0.5 mr-1 ml-1.5 h-[42px] rounded-b-lg bg-white px-3 pt-1.5">
          <button className="h-8 border-b-[3px] border-[#107c41] text-[20px] leading-7 font-semibold">Table</button>
        </div>
        <span className="h-7 w-px self-center bg-[#cbcbd0]" />
        <SheetTab>Data Table</SheetTab>
        <SheetTab>Goal Seek</SheetTab>
        <SheetTab>Number Attending by City</SheetTab>
      </div>
      <button aria-label="New sheet" className="ml-[62px]"><Svg w={18} h={18}><path d="M9 0v18M0 9h18" stroke="#3b3b3b" strokeWidth="1.600" /></Svg></button>
      <span className="flex-1" />
      <Svg w={4} h={18}><path d="M0 0h3v3H0zM0 7h3v3H0zM0 14h3v3H0z" fill="#3b3b3b" /></Svg>
      <div className="mr-7 ml-[22px] flex h-[26px] w-[966px] items-center rounded-full bg-[#f5f5f5] px-2">
        <Svg w={10} h={14}><path d="M0 7 8 0a1.500 1.500 0 0 1 2 1v12a1.500 1.500 0 0 1-2 1z" fill="#6e6e6e" /></Svg>
        <div className="mx-[7px] flex-1"><div className="h-3 w-[95%] rounded-full bg-[#6e6e6e]" /></div>
        <Svg w={10} h={14}><path d="M10 7 2 0a1.500 1.500 0 0 0-2 1v12a1.500 1.500 0 0 0 2 1z" fill="#6e6e6e" /></Svg>
      </div>
    </div>
  );
}

function StatusBar() {
  return (
    <div className="flex h-[35px] shrink-0 items-center border-t border-b-2 border-t-white border-b-[#abadba] bg-[#f4f4f4] pl-3 text-[15px] text-[#3b3b3b]">
      <span>Ready</span>
      <button className="ml-[26px] flex items-center gap-1.5">
        <Svg w={21} h={23}>
          <circle cx="9" cy="3" r="2.500" stroke="#333" strokeWidth="1.500" />
          <path d="M1 4c0 3 5 4 6 5v5l-4 7M17 4c0 3-5 4-6 5v4" stroke="#333" strokeWidth="1.700" />
          <path d="m4 22 4-7 2 2M11 12l9 10M20 12l-9 10" stroke="#333" strokeWidth="1.700" />
        </Svg>
        Accessibility: Investigate
      </button>
      <span className="flex-1" />
      <button aria-label="Normal view" className="flex h-8 w-[60px] items-center justify-center bg-[#e0e0e0]">
        <Svg w={20} h={20}><path d="M1 1h18v18H1zM1 7h18M1 13h18M7 1v18M13 1v18" stroke="#262626" strokeWidth="1.600" /></Svg>
      </button>
      <button aria-label="Page layout view" className="flex h-8 w-[60px] items-center justify-center">
        <Svg w={21} h={20}><path d="M1 1h19v18H1zM5 4h11v12H5zM7 7h7M7 10h7M7 13h7" stroke="#262626" strokeWidth="1.600" /></Svg>
      </button>
      <button aria-label="Page break preview" className="flex h-8 w-[60px] items-center justify-center">
        <Svg w={21} h={20}><path d="M1 1h19v18H1zM1 11h12V1M7 1v10" stroke="#262626" strokeWidth="1.600" /></Svg>
      </button>
      <button aria-label="Zoom out" className="ml-2"><Svg w={12} h={12}><path d="M0 6h12" stroke="#333" strokeWidth="1.400" /></Svg></button>
      <input
        type="range"
        aria-label="Zoom"
        defaultValue="53"
        className="mx-2 h-4 w-[148px] appearance-none bg-[linear-gradient(#666,#666)] bg-[length:100%_2px] bg-center bg-no-repeat [&::-webkit-slider-thumb]:h-4 [&::-webkit-slider-thumb]:w-[9px] [&::-webkit-slider-thumb]:appearance-none [&::-webkit-slider-thumb]:bg-[#666]"
      />
      <button aria-label="Zoom in"><Svg w={12} h={12}><path d="M0 6h12M6 0v12" stroke="#333" strokeWidth="1.400" /></Svg></button>
      <button className="w-[70px] pr-3 text-right">120%</button>
    </div>
  );
}

/* ---------- taskbar ---------- */

function TaskItem({ label, running, active, children }) {
  return (
    <button aria-label={label} className={`flex h-[58px] w-14 flex-col items-center rounded-md pt-[11px] ${active ? "bg-[#ebebf2] shadow-[0_1px_1px_rgba(0,0,0,0.2)]" : ""}`}>
      {children}
      {running && <span className={active ? "mt-[5px] h-[5px] w-6 rounded-full bg-[#0078d7]" : "mt-[5px] h-[5px] w-[9px] rounded-full bg-[#7b7b85]"} />}
    </button>
  );
}

function Taskbar() {
  return (
    <footer className="grid h-[70px] shrink-0 grid-cols-[1fr_auto_1fr] items-center bg-[linear-gradient(90deg,#d6d8e4_0%,#d7d8e3_20%,#d6d8ef_30%,#d7d8ec_45%,#d9d9e6_65%,#dbd8e4_78%,#d6d9e6_84%,#d8d9df_92%,#d7d8db_100%)] pb-0.5">
      <div className="flex items-center gap-[11px] pl-[29px] text-[17px] leading-6">
        <Svg w={37} h={26}>
          <defs>
            <linearGradient id="cl" x1="0" y1="0" x2="0" y2="1">
              <stop stopColor="#5f8fe0" />
              <stop offset="1" stopColor="#cfe0fa" />
            </linearGradient>
          </defs>
          <path d="M12 12a9 9 0 0 1 17-2z" fill="#6d96e6" />
          <path d="M8 25a8 8 0 1 1 5-14l3 3a9 9 0 1 1 12 11z" fill="url(#cl)" />
          <path d="M9 11C10-2 26-3 28 9c-6-1-11 2-11 8-2-4-4-6-8-6z" fill="#8fb2f2" />
        </Svg>
        <div className="whitespace-nowrap">
          <p className="text-[#1c1c1c]">73°F</p>
          <p className="text-[#5c5c66]">Cloudy</p>
        </div>
      </div>

      <div className="flex items-center pl-3">
        <button aria-label="Start" className="mr-[22px]">
          <Svg w={35} h={35}>
            <defs>
              <linearGradient id="win" x1="0" y1="0" x2="1" y2="1">
                <stop stopColor="#4cc9fb" />
                <stop offset="1" stopColor="#0067c6" />
              </linearGradient>
            </defs>
            <path d="M1 0h16v17H0V1zM18 0h16l1 1v16H18zM0 18h17v17H1l-1-1zM18 18h17v16l-1 1H18z" fill="url(#win)" />
          </Svg>
        </button>
        <label className="flex h-[46px] w-[325px] items-center rounded-full bg-[#f3f3fa] px-4 shadow-[0_0_0_1px_#c9cadb,0_2px_1px_#b6b7cc]">
          <Svg w={23} h={25}>
            <circle cx="10" cy="10" r="8" stroke="#262626" strokeWidth="2.500" />
            <path d="m16 16 6 7" stroke="#262626" strokeWidth="2.800" />
          </Svg>
          <input aria-label="Search Windows" placeholder="Search" className="ml-[15px] min-w-0 flex-1 bg-transparent text-[18px] outline-none placeholder:text-[#66666c]" />
          <Svg w={32} h={32} className="-mr-2">
            <path d="M4 29V15a12.500 12.500 0 1 1 6 11c-2 2-4 3-6 3z" fill="#fff" stroke="#1b6fe0" strokeWidth="2" />
            <path d="m12 8 4 2v12l-4-2z" fill="#1b9de8" />
            <path d="m16 22 7-4v-3l-6-2 1 3 2 1-8 4z" fill="#1b54d0" />
          </Svg>
        </label>
        <div className="ml-[11px] flex gap-2.5">
          <TaskItem label="Task view">
            <Svg w={36} h={36}>
              <path d="M0 11h27v24H2l-2-2z" fill="#262626" />
              <path d="M9 2h27v24H9z" fill="#fafafa" opacity=".95" />
              <path d="M9 11h18v15H9z" fill="#bdbdbd" />
            </Svg>
          </TaskItem>
          <div className="relative">
            <TaskItem label="Chat">
              <Svg w={36} h={36}>
                <path d="M1 36 3 28A17 17 0 1 1 13 35z" fill="#6560c4" />
                <path d="M3 12A17 17 0 0 1 20 2l6 6-12 8z" fill="#8b7bbd" />
                <rect x="8" y="12" width="15" height="14" rx="3" fill="#fff" />
                <path d="m25 17 4-3v11l-4-3z" fill="#fff" />
              </Svg>
            </TaskItem>
            <span className="absolute top-1 right-0.5 flex size-6 items-center justify-center rounded-full bg-[#0078d7] text-[15px] leading-none text-white">1</span>
          </div>
          <TaskItem label="File Explorer">
            <Svg w={36} h={36}>
              <path d="M0 4q0-2 2-2h9l4 3h21v5H0z" fill="#dca009" />
              <path d="M0 8h12l4-2h20v27q0 2-2 2H0z" fill="#fdc93c" />
              <path d="M6 35v-7q0-4 4-4h16q4 0 4 4v7z" fill="#0f6fc0" />
              <path d="M11 29h14" stroke="#0a4d8c" strokeWidth="2" />
            </Svg>
          </TaskItem>
          <TaskItem label="Edge" running>
            <Svg w={36} h={36}>
              <defs>
                <linearGradient id="eg" x1="0" y1="0" x2="1" y2=".6">
                  <stop stopColor="#1b8fd8" />
                  <stop offset=".5" stopColor="#2bc3d2" />
                  <stop offset="1" stopColor="#63e062" />
                </linearGradient>
              </defs>
              <path d="M0 18C0 8 8 0 18 0s18 7 18 15c0 6-4 9-9 9-4 0-5-2-5-3 2-3 1-7-3-8C12 11 4 12 0 18z" fill="url(#eg)" />
              <path d="M0 18C3 9 14 7 20 12c-6 0-9 7-6 13 3 7 12 7 17 4-2 4-8 7-13 7C8 36 0 28 0 18z" fill="#0f78d4" />
              <path d="M14 16c-4 9 4 16 12 14 4-1 7-2 7-2-4 6-10 8-16 8-8-3-10-14-3-20z" fill="#12529c" />
            </Svg>
          </TaskItem>
          <TaskItem label="Microsoft Store">
            <Svg w={36} h={36}>
              <path d="M9 8V2h18v6" stroke="#2cc0f5" strokeWidth="2.500" />
              <path d="M0 6h35v25q0 5-5 5H5q-5 0-5-5z" fill="#12508f" />
              <path d="M10 14h7v7h-7z" fill="#f25022" />
              <path d="M18 14h7v7h-7z" fill="#7fba00" />
              <path d="M10 22h7v7h-7z" fill="#00a4ef" />
              <path d="M18 22h7v7h-7z" fill="#ffb900" />
            </Svg>
          </TaskItem>
          <TaskItem label="L app">
            <Svg w={36} h={36}>
              <path d="M0 0h36v36H0z" fill="#27aedb" />
              <path d="m12 6-4 24 6-4z" fill="#0b2f6b" />
              <path d="m8 30 6-4h5z" fill="#0b2f6b" />
              <path d="M12 6h5v16h11v5H12z" fill="#fff" />
            </Svg>
          </TaskItem>
          <TaskItem label="A app">
            <Svg w={36} h={36}>
              <rect width="36" height="36" rx="4" fill="#3b8bcb" />
              <path d="M23 4q3-1 8-1v8H19zM15 14l4 1 2 6 3 5-7-1-5 8H5z" fill="#fff" />
              <path d="M22 14h5l5 1v18h-6V20z" fill="#fff" />
            </Svg>
          </TaskItem>
          <TaskItem label="McAfee">
            <Svg w={32} h={36}>
              <path d="m0 0 16 7 16-7v28l-16 8-16-8zm6 9v15l10 5 10-5V9l-10 5z" fill="#c12f2e" fillRule="evenodd" />
            </Svg>
          </TaskItem>
          <TaskItem label="Excel" running active><OfficeLogo size={36} letter="X" colors={excelColors} /></TaskItem>
          <TaskItem label="Word" running><OfficeLogo size={36} letter="W" colors={wordColors} /></TaskItem>
        </div>
      </div>

      <div className="flex items-center justify-end pr-7">
        <button aria-label="Show hidden icons"><Svg w={17} h={11}><path d="m1 9.500 7.500-8 7.500 8" stroke="#262626" strokeWidth="2" /></Svg></button>
        <Svg w={26} h={22} className="ml-7">
          <path d="M6 17a6 6 0 0 1 0-11C9-1 18-1 20 6c5 1 6 8 1 11z" fill="#8a8a8a" stroke="#333" strokeWidth="1.600" />
          <path d="M8 16 22 7c4 3 3 8 0 10z" fill="#d5d5d5" />
          <circle cx="18" cy="15" r="7" fill="#fff" />
          <path d="M14 14a4 4 0 0 1 7-2M22 16a4 4 0 0 1-7 2" stroke="#0067c0" strokeWidth="1.700" />
        </Svg>
        <Svg w={25} h={20} className="ml-[21px]">
          <path d="M1 7.500a16 16 0 0 1 23 0M4.500 11.500a11.500 11.500 0 0 1 16 0M8 15a6.500 6.500 0 0 1 9 0" stroke="#262626" strokeWidth="1.800" />
          <circle cx="12.500" cy="17.500" r="2" fill="#262626" />
        </Svg>
        <Svg w={25} h={20} className="ml-[11px]">
          <path d="M1 7h4l6-5v16l-6-5H1z" stroke="#262626" strokeWidth="1.600" strokeLinejoin="round" />
          <path d="M14 7q2 3 0 6M17 4q4 6 0 12" stroke="#262626" strokeWidth="1.600" />
          <path d="M20 1q6 9 0 18" stroke="#aaa" strokeWidth="1.600" />
        </Svg>
        <Svg w={25} h={18} className="ml-[11px]">
          <rect x="1" y="1.500" width="20" height="14" rx="3" stroke="#262626" strokeWidth="1.700" />
          <path d="M4 4h4v9H4zM22 6h1.500q1 0 1 1v3q0 1-1 1H22z" fill="#262626" />
        </Svg>
        <div className="ml-6 text-right text-[18px] leading-6 text-[#1c1c1c]">
          <p>4:47 PM</p>
          <p>7/19/2023</p>
        </div>
        <span className="ml-[11px] flex size-[26px] items-center justify-center rounded-full bg-[#0067c0] text-[15px] text-white">10</span>
      </div>
    </footer>
  );
}

export default function App() {
  return (
    <div className="flex h-screen flex-col overflow-hidden bg-[linear-gradient(90deg,#e5e2e4_0%,#ece3e3_18%,#f0e7e5_45%,#efe8e8_60%,#f0e6e4_72%,#ebe6e4_82%,#e9e2e9_92%,#e2e3ea_100%)] font-['Open_Sans','Noto_Sans',sans-serif]">
      <TitleBar />
      <TabRow />
      <Ribbon />
      <FormulaBar />
      <main className="flex min-h-0 flex-1 bg-[#e4e4e9]">
        <Sheet />
        <VerticalScroll />
      </main>
      <SheetTabs />
      <StatusBar />
      <Taskbar />
    </div>
  );
}
